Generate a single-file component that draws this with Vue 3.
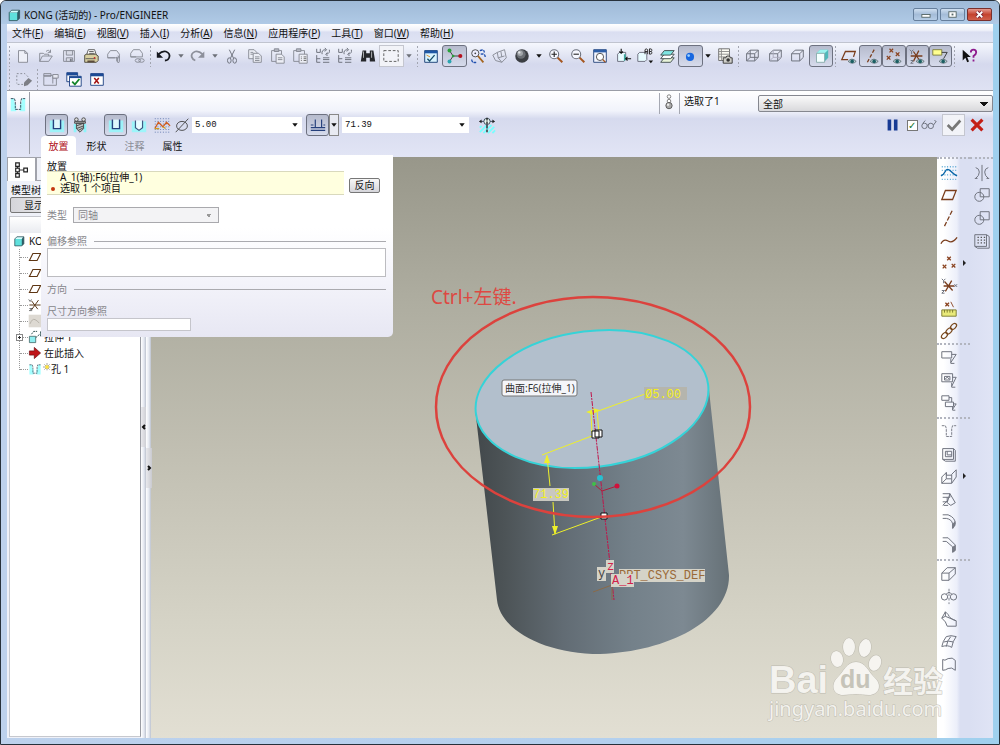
<script setup>
import { h, ref } from 'vue'

const G = 'fill="none" stroke="#858892" stroke-width="1"'
const D = 'fill="none" stroke="#6f737e" stroke-width="1.1"'
const B = 'fill="none" stroke="#7a3d1c" stroke-width="1.4"'
const eye = '<path d="M9 16q4-5 9 0q-4 4-9 0z" fill="#b9cfd2" stroke="#4a5a60" stroke-width=".8"/><circle cx="13.500" cy="16" r="2" fill="#1c5f63"/>'
const cross = (x, y, c = '#8a4320') => `<path d="M${x - 2} ${y - 2}l4 4m0-4l-4 4" stroke="${c}" stroke-width="1.4"/>`
const page = (x, y) => `<path d="M${x} ${y}h6l3 3v7h-9z" fill="#eceef5" stroke="#858892"/>`
const hatch = '<path d="M2 13l2-2M2 18L10 10M6 19l9-9M11 19l7-7M16 19l3-3" stroke="#7ff" stroke-width="2"/>'
const lens = (inner) => `<path d="M11.500 11.500l5.500 5.500" stroke="#a5561f" stroke-width="2.200"/><circle cx="8" cy="8" r="5" fill="#f6f8ff" stroke="#6b707c" stroke-width="1.200"/>${inner}`
const cube = (front) => `<path d="M4 7.500l4-4h9v8l-4 4M4 7.500h9v8H4zM13 7.500l4-4" ${front}/>`

const icons = {
  part: '<path d="M4 7l3-3h10v10l-3 3H4z" fill="#2c5d66"/><path d="M4 7h10v10H4z" fill="#5fe0dc"/><path d="M4 7l3-3h9l-2 3z" fill="#d5ffff"/><path d="M4 7l3-3h10v10l-3 3H4z" fill="none" stroke="#33555c"/>',
  new: '<path d="M5 4h7l3 3v10H5zM12 4v3h3" fill="#eef0f8" stroke="#858892"/>',
  open: `<path d="M3 16V7h4l1 1h5v2M3 16l3-6h11l-4 6zM10 5q3-3 5 1m0-3v3h-3" ${G}/>`,
  save: `<path d="M4 4h12v12H4z" ${G}/><path d="M7 4h7v5H7zM7 12h7v4H7z" fill="#d8dbe6" stroke="#858892"/><path d="M11 13h2v3h-2z" fill="#777b86"/>`,
  print: '<path d="M7 3h7l2 6H5z" fill="#fff" stroke="#555"/><path d="M8 5h5M8 7h6" stroke="#555"/><path d="M3 9l2-1h10l3 2v5l-2 2H3z" fill="#d8cfa0" stroke="#4a463a"/><path d="M4 13h11" stroke="#555"/><path d="M6 15h8v2H6z" fill="#5b4a3a"/><circle cx="14" cy="12" r="1" fill="#c22"/>',
  mail: `<path d="M3 12V8l3-4h7l3 4v4zM3 12h8M14 10q2 0 2 2v4q0 2-2 1V12" ${G}/><path d="M13 11v5" stroke="#858892"/>`,
  maillink: `<path d="M3 11V7l3-4h7l3 4v4zM3 11h6" ${G}/><ellipse cx="11" cy="15" rx="3" ry="2" ${G}/><ellipse cx="15" cy="15" rx="3" ry="2" ${G}/>`,
  undo: '<path d="M4 8q4-4 8-3q5 2 4 6q-1 4-5 4" fill="none" stroke="#16181e" stroke-width="2"/><path d="M2 5v7h7z" fill="#16181e"/>',
  redo: '<path d="M15 8q-4-4-8-3q-5 2-4 6q1 3 4 4" fill="none" stroke="#8d909b" stroke-width="2"/><path d="M17 5v7h-7z" fill="#8d909b"/>',
  down: '<path d="M7 8h6l-3 4z" fill="#6d7078"/>',
  downk: '<path d="M7 8h6l-3 4z" fill="#111"/>',
  cut: `<path d="M7 3l5 10M13 3L8 13" ${D}/><ellipse cx="7" cy="15" rx="2" ry="3" ${D}/><ellipse cx="13" cy="15" rx="2" ry="3" ${D}/>`,
  copy: page(3, 3) + page(8, 7) + '<path d="M5 6h3M5 8h3M10 11h5M10 13h5M10 15h5" stroke="#858892"/>',
  paste: `<path d="M4 4h11v12H4z" ${G}/><path d="M7 2h5v3H7z" fill="#b5b8c2" stroke="#858892"/>` + page(9, 8) + '<path d="M11 12h5M11 14h5" stroke="#858892"/>',
  pastes: `<path d="M3 4h12v12H3z" ${G}/><path d="M6 2h5v3H6z" fill="#b5b8c2" stroke="#858892"/><path d="M9 8h9v10H9z" fill="#eceef5" stroke="#858892"/><path d="M11 11h1m2 0h3M11 13h1m2 0h3M11 15h1m2 0h3" stroke="#666"/>`,
  regen: `<path d="M3 2v4h4V2M3 9v8h4M3 13h4M10 12h7M10 14h7M10 17h7M9 8q-1-5 4-5m-1-2l2 2-2 2M17 3q1 4-3 5m1-2l-2 2 2 2" ${D}/>`,
  find: '<path d="M4 4h4v3h4V4h4l2 12h-6v-4H8v4H2z" fill="#25272b"/><path d="M5 5v7M14 5v7" stroke="#b9bbbd"/>',
  box: '<path d="M2 4h16v12H2z" fill="none" stroke="#555" stroke-dasharray="3 2"/>',
  repaint: '<path d="M3 4h14v13H3z" fill="#d8f3ff" stroke="#12386f"/><path d="M3 4h14v3H3z" fill="#1f57a5"/><path d="M14 9l-6 7M6 13l3 3" stroke="#174d6a" stroke-width="1.500"/><path d="M5 9l4 2" stroke="#e28a1e"/>',
  spin: '<path d="M5 4l4 6h7M9 10l-4 6" fill="none" stroke="#333"/><circle cx="5" cy="4" r="2.200" fill="#28a13a"/><circle cx="5" cy="16" r="2.200" fill="#2aa5b0"/><circle cx="17" cy="10" r="2.300" fill="#b5121f"/><circle cx="9" cy="10" r="1.500" fill="#28a13a"/>',
  orient: '<circle cx="7" cy="7" r="4" fill="#eef" stroke="#444"/><circle cx="7" cy="7" r="1" fill="#444"/><path d="M10 10l6 7" stroke="#a5651f" stroke-width="2"/><path d="M12 4q5-2 5 2m-4 2q5-1 5 3M3 14q0 4 5 3" fill="none" stroke="#1f4fae" stroke-width="1.500" stroke-dasharray="3 1"/>',
  view: `<path d="M2 9l5-3 8-3 2 9-5 5-7-2zM7 6l1 6 7-2M8 12l4 5M11 5l1 6" ${G}/>`,
  sphere: '<circle cx="10" cy="10" r="7.500" fill="#3b3e43"/><circle cx="9" cy="8" r="5" fill="#6b6f75"/><circle cx="8" cy="7" r="3" fill="#a2a6aa"/><circle cx="7" cy="6" r="1.300" fill="#e2e4e6"/>',
  zoomin: lens('<path d="M5 8h6M8 5v6" stroke="#222" stroke-width="1.200"/>'),
  zoomout: lens('<path d="M5 8h6" stroke="#222" stroke-width="1.200"/>'),
  refit: '<path d="M3 3h14v14H3z" fill="#f3f6ff" stroke="#1f3f77"/><path d="M3 3h14v3H3z" fill="#2d5fa8"/><circle cx="10" cy="11" r="4" fill="#fff" stroke="#444"/><path d="M13 14l3 3" stroke="#a5561f" stroke-width="1.500"/>',
  reorient: '<path d="M4 8l2-2h7v8l-2 2H4z" fill="#e7fbff" stroke="#667"/><path d="M11 8h2v6l-2 2z" fill="#3aa79d"/><path d="M8 2v5m-2-2l2 2 2-2M19 13h-6m2-2l-2 2 2 2" fill="none" stroke="#111" stroke-width="1.200"/>',
  saved: '<path d="M2 8l2-2h8v8l-2 2H2z" fill="#e7fbff" stroke="#667"/><path d="M10 8V3q1-2 3 0v5M10 5h3M15 2v6M15 2q4 0 2 3q2 3-2 3M15 5h2" fill="none" stroke="#222"/><path d="M14 15h5l-2.500 3z" fill="#111"/>',
  layers: '<path d="M7 12h11l-4 5H3z" fill="#e9f4d9" stroke="#3c4a4a"/><path d="M7 8h11l-4 5H3z" fill="#fff" stroke="#3c4a4a"/><path d="M7 4h11l-4 5H3z" fill="#7fe5e2" stroke="#3c4a4a"/>',
  ball: '<circle cx="10" cy="11" r="4.500" fill="#1767e0"/><circle cx="8.500" cy="9.500" r="1.500" fill="#9cd0ff"/>',
  camera: '<path d="M3 2h12v13H3z" fill="#fbfbf4" stroke="#666"/><path d="M3 5h12M3 8h12M3 11h12M6 2v13" stroke="#888"/><path d="M8 12h3l1-2h3l1 2h2v6H8z" fill="#cfcfc9" stroke="#333"/><circle cx="13.500" cy="14.500" r="2" fill="#333"/>',
  wire: cube(D) + `<path d="M4 15.500l4-4h9M8 3.500v8" ${D}/>`,
  hidden: cube(D) + '<path d="M4 15.500l4-4h9M8 3.500v8" fill="none" stroke="#aab" />',
  nohidden: cube(D),
  shaded: '<path d="M5 7l4-4h9v9l-4 4z" fill="#4fb9ba"/><path d="M5 7l4-4h9l-4 4z" fill="#9ef3ef"/><path d="M5 7h9v10H5z" fill="#f4ffff" stroke="#8aa"/>',
  plane: `<path d="M2 15L6 5h12l-4 10z" ${B}/>`,
  planeeye: `<path d="M9 14H2l4-9h11l-2 6" ${B}/>` + eye,
  axiseye: `<path d="M6 17L14 2" ${B} stroke-dasharray="4 2"/>` + eye,
  pointeye: cross(7, 4) + cross(14, 8) + cross(4, 12) + eye,
  csyseye: `<path d="M3 10h13M6 5l7 10M12 4L6 16" ${B}/><path d="M2 3l2 2 2-2M4 5v3M3 15h3l-3 3h3" ${D}/>` + eye,
  annoeye: '<path d="M2 3h10v6H2z" fill="#ffff90" stroke="#7b7b3a"/><path d="M12 6h6l-4 7" fill="none" stroke="#333"/>' + eye,
  help: '<path d="M3 3v12l3-3 2 5 2-1-2-5h4z" fill="#111"/><path d="M12 6q0-3 3-3t3 3q0 2-3 4v2M15 14v2" fill="none" stroke="#8d1b8d" stroke-width="2"/>',
  clean: `<path d="M2 4h9l4 4M2 6v9M3 16h7" fill="none" stroke="#858892" stroke-dasharray="2 2"/><path d="M10 14l5-5 4 3-5 5-4 1z" fill="#7d7f86"/>`,
  win: `<path d="M2 6h10v9M2 4h8v3H2zM2 7v10h14V9h-4" ${G}/><path d="M12 5h6v4h-6z" fill="#e6e8f1" stroke="#858892"/>`,
  winok: '<path d="M2 3h12v10H2z" fill="#fff" stroke="#1a3d80"/><path d="M2 3h12v3H2z" fill="#1c4a95"/><path d="M5 7h13v11H5z" fill="#fff" stroke="#1a3d80"/><path d="M5 7h13v2H5z" fill="#1c4a95"/><path d="M8 13l3 3 5-6" fill="none" stroke="#14852a" stroke-width="2"/>',
  winx: '<path d="M3 4h14v13H3z" fill="#fff" stroke="#1a3d80"/><path d="M3 4h14v3H3z" fill="#1c4a95"/><path d="M7 9l5 6m0-6l-5 6" stroke="#a11212" stroke-width="1.700"/>',
  hole: '<path d="M2 4h4v5l2 2v7H2zM18 4h-4v5l-2 2v7h6z" fill="#a4ffff"/><path d="M2 4h4l1 3v9h6V7l1-3h4" fill="none" stroke="#345" stroke-dasharray="3 1"/>',
  straight: '<path d="M2 5h16v13H2z" fill="#9df2f8"/><path d="M7 4h6v10H7z" fill="#dff6fb"/><path d="M6 4v10h8V4" fill="none" stroke="#26407c" stroke-width="1.500"/>',
  screw: '<path d="M3 9h3v9H3zM14 9h3v9h-3z" fill="#8df5fa"/><circle cx="6" cy="4" r="2" fill="#ddd" stroke="#444"/><circle cx="14" cy="4" r="2" fill="#ddd" stroke="#444"/><path d="M4 6h12v2H4zM6 8h8v6l-4 4-4-4z" fill="#c2c6c6" stroke="#444"/><path d="M6 11l8-3M6 14l8-3M8 16l6-3" stroke="#444"/>',
  vhole: '<path d="M2 6h16v12H2z" fill="#9df5fa"/><path d="M7 5h6v8l-3 3-3-3z" fill="#e9fbff"/><path d="M6 5v8l4 3 4-3V5" fill="none" stroke="#3c4f7c" stroke-width="1.200"/>',
  sketch: '<path d="M2 3h17M2 6h17M2 9h17M2 12h17M2 15h17M2 18h17" stroke="#5670a8" stroke-dasharray="1 2"/><path d="M2 14l4-7 5 5 4-5 4 4" fill="none" stroke="#cf5c20" stroke-width="1.400"/><path d="M2 14h5M11 12l3 2" stroke="#cf9c20" stroke-width="1.400"/>',
  dia: '<ellipse cx="10" cy="11" rx="6" ry="5" fill="none" stroke="#444"/><path d="M3 18L17 3" stroke="#444"/>',
  depth: '<path d="M7 4v9h7V4M2 13h16M2 16h16M2 10h3M16 10h2" fill="none" stroke="#26407c" stroke-width="1.300"/>',
  lightaxis: hatch + '<path d="M10 3v16" stroke="#222" stroke-dasharray="3 1" stroke-width="1.500"/><path d="M3 6h14" stroke="#345"/><circle cx="10" cy="6" r="3.500" fill="#e8f8f0" stroke="#345"/><path d="M10 2v9" stroke="#222" stroke-dasharray="3 1" stroke-width="1.500"/><path d="M1 6l3-2v4zM19 6l-3-2v4z" fill="#222"/>',
  traffic: '<circle cx="10" cy="4" r="2" fill="#fff" stroke="#777"/><circle cx="10" cy="9" r="2" fill="#fff" stroke="#777"/><circle cx="10" cy="14" r="3.500" fill="#aaa" stroke="#555"/><circle cx="9" cy="13" r="1.300" fill="#eee"/>',
  pause: '<path d="M4 4h4v12H4zM11 4h4v12h-4z" fill="#173a94"/>',
  glasses: `<circle cx="5" cy="11" r="3" ${D}/><circle cx="12" cy="11" r="3" ${D}/><path d="M8 10h1M3 8l3-3M15 10l3-4-2-1" ${D}/>`,
  ok: '<path d="M3 10l5 5 9-10" fill="none" stroke="#777" stroke-width="3"/>',
  cancel: '<path d="M4 4l12 12M16 4L4 16" stroke="#c41e16" stroke-width="3.500"/>',
  tree: '<path d="M3 2h4v4H3zM3 8h4v4H3zM3 14h4v4H3zM12 8h4v4h-4z" fill="#fff" stroke="#222" stroke-width="1.300"/><path d="M5 6v2M5 12v2M7 10h5" stroke="#222"/>',
  sketchblue: '<path d="M2 3h16M2 7h16M2 12h16M2 17h16" stroke="#4aa0d0" stroke-width="1.500" stroke-dasharray="1 2"/><path d="M1 13q3-1 5-5t6 0t7 5" fill="none" stroke="#0a66a8" stroke-width="1.600"/>',
  axis: `<path d="M5 19L14 1" ${B} stroke-dasharray="5 2"/>`,
  curve: `<path d="M1 13q3-6 8-3t10-4" ${B}/>`,
  points: cross(10, 5) + cross(5, 14) + cross(15, 13),
  csys: `<path d="M4 10h12M5 5l9 10M13 4L6 16" ${B}/><path d="M2 2l2 2 2-2M4 4v3M2 15h3l-3 3h3M16 8l3 3m0-3l-3 3" ${D}/>`,
  ruler: cross(8, 5) + '<path d="M12 2l3 6" stroke="#8a4320"/><path d="M2 11h16v7H2z" fill="#e9ea7a" stroke="#77762c"/><path d="M5 11v3M8 11v3M11 11v3M14 11v3" stroke="#77762c"/>',
  chain: '<g fill="none" stroke="#7a4a20" stroke-width="1.400"><ellipse cx="5" cy="15" rx="4" ry="2.500" transform="rotate(-45 5 15)"/><ellipse cx="10" cy="10" rx="4" ry="2.500" transform="rotate(-45 10 10)"/><ellipse cx="15" cy="5" rx="4" ry="2.500" transform="rotate(-45 15 5)"/></g>',
  note: `<path d="M2 3h11v7H2zM13 6h5l-6 9m0-4v5h4" ${D}/>`,
  note2: `<path d="M2 3h12v9H2zM14 7h4l-5 10m0-4v5h4M5 10V6h6v4zM6 9q2-4 4 0" ${D}/>`,
  note3: `<path d="M2 2h8v5H2zM6 9h9v5H6zM15 11h3l-4 6m0-3v4h3M10 4h3v5" ${D}/>`,
  holeg: `<path d="M2 3h4l1 3v9h6V6l1-3h4" fill="none" stroke="#6f737e" stroke-dasharray="3 1"/>`,
  shell: `<path d="M3 4h12v12H3zM15 4l2 2v12H6l-3-2M6 7h7v6H6zM8 7v4h5" ${D}/>`,
  rib: `<path d="M2 10l5-5v7h6V7l5-5v8l-5 7H2zM7 12l-5 5M13 12v5M7 5v3h6" ${D}/>`,
  draft: `<path d="M3 3h8v4H3M3 12h5V7M11 3l6 10-5 3-4-3 3-10M3 16l6-6M9 16H4" ${D}/>`,
  round: `<path d="M3 2h6q8 3 8 10l-3 5v-5q-1-5-7-6H3" ${D}/><path d="M14 12l3-3v5l-3 4z" fill="#777a84"/>`,
  chamfer: `<path d="M3 2h6l8 8v6l-3 2v-6L7 6H3" ${D}/><path d="M14 12l3-2v6l-3 3z" fill="#777a84"/>`,
  extrude: `<path d="M2 9h8v8H2zM2 9l6-6h9v7l-7 7M10 9l7-6" ${D}/>`,
  revolve: `<circle cx="5" cy="11" r="3.500" ${D}/><circle cx="15" cy="11" r="3.500" ${D}/><path d="M10 2v17" fill="none" stroke="#777b86" stroke-dasharray="3 2"/><path d="M7 8q3-4 6 0" ${D}/>`,
  sweep: `<path d="M6 2l3 3q2 5 9 7v6H8q-1-5-6-9zM6 2v5L2 9M6 7l12 5" ${D}/>`,
  blend: `<path d="M7 4q5-2 11 0q-4 5-5 12q-4-3-11-1q1-6 5-11zM4 10q5-2 11 0M12 4q-4 4-5 11" ${D}/>`,
  style: `<path d="M3 5q2 2 6-1 5-2 8 2v11q-4-4-8-2-3 2-6 2z" ${D}/>`,
  mirror: `<path d="M10 1v18M3 4q4 1 4 5t-4 7M17 4q-4 1-4 5t4 7M2 16h3M15 16h3" ${D}/>`,
  merge: `<circle cx="7" cy="12" r="5" ${D}/><path d="M8 3h10v9H8z" ${D}/>`,
  pattern: `<path d="M2 3h13v13H2zM15 3l3 2v13H5l-3-2" ${D}/><path d="M5 6h9M5 9h9M5 12h9" stroke="#555" stroke-width="1.500" stroke-dasharray="1.500 2"/>`,
  tplane: '<path d="M2 15L7 5h11l-5 10z" fill="none" stroke="#5d3512" stroke-width="1.600"/>',
  tcsys: '<path d="M2 10h16M5 4l9 12M15 3L5 17" fill="none" stroke="#5b3a1a" stroke-width="1.400"/><path d="M1 2l2 3 2-3M2 15h4l-4 3h4" fill="none" stroke="#444"/>',
  tsketch: '<path d="M1 1h18v18H1z" fill="#ddd9d2"/><path d="M3 14q3-8 7-6t6 5" fill="none" stroke="#a8a39a"/>',
  textrude: '<path d="M2 9h9v9H2z" fill="#90eef0" stroke="#355"/><path d="M11 11l7-6M5 6l3-4h5M18 2v8" fill="none" stroke="#355" stroke-width="1.400" stroke-dasharray="3 1"/>',
  arrow: '<path d="M2 7h7V2l9 8-9 8v-5H2z" fill="#c01418" stroke="#6b0c0e"/>',
  star: '<path d="M10 1v18M1 10h18M4 4l12 12M16 4L4 16" stroke="#444" stroke-width="2" stroke-dasharray="2 1"/><path d="M6 6h8v8H6z" fill="#ffe23a"/>',
}
const Ico = (p) => h('svg', { class: 'ico', viewBox: '0 0 20 20', 'aria-hidden': 'true', innerHTML: icons[p.n] })
Ico.props = ['n']

const menus = [
  ['文件', 'F'], ['编辑', 'E'], ['视图', 'V'], ['插入', 'I'], ['分析', 'A'],
  ['信息', 'N'], ['应用程序', 'P'], ['工具', 'T'], ['窗口', 'W'], ['帮助', 'H'],
]
const row1 = [
  { c: 'g6', items: ['new', 'open', 'save', 'print', 'mail', 'maillink'] },
  { c: 'gedit', items: ['undo', '-down', 'redo', '-down', 'cut', 'copy', 'paste', 'pastes', 'regen', 'regen', 'find', '~box', '-down'] },
  { c: 'gview', items: ['repaint', '+spin', 'orient', 'view', 'sphere', '-downk', 'zoomin', 'zoomout', 'refit', 'reorient', 'saved', 'layers', '+ball', '-downk', 'camera'] },
  { c: 'g4', items: ['wire', 'hidden', 'nohidden', '+shaded'] },
  { c: 'g5', items: ['planeeye', '+axiseye', '+pointeye', '+csyseye', '+annoeye'] },
  { c: 'g1', items: ['help'] },
]
const row2 = [
  { c: 'g1', items: ['clean'] },
  { c: 'g3', items: ['win', 'winok', 'winx'] },
]
const side1 = [
  ['sketchblue', 'plane', 'axis', 'curve', 'points', 'csys', 'ruler', 'chain'],
  ['note', 'note2', 'note3'],
  ['holeg', 'shell', 'rib', 'draft', 'round', 'chamfer'],
  ['extrude', 'revolve', 'sweep', 'blend', 'style'],
]
const side2 = ['mirror', 'merge', 'merge', 'pattern']
const flyouts = ['points', 'rib']
const tree = [
  { i: 'tplane' }, { i: 'tplane' }, { i: 'tplane' }, { i: 'tcsys' }, { i: 'tsketch' },
  { i: 'textrude', t: '拉伸 1', plus: true }, { i: 'arrow', t: '在此插入' }, { i: 'hole', t: '孔 1', star: true },
]
const bare = (n) => n.replace(/^[-+~]/, '')
const kind = (n) => ({ '-': 'half', '+': 'pressed', '~': 'framed' })[n[0]] || ''
const diameter = ref('5.00')
const depth = ref('71.39')
const preview = ref(true)
</script>

<template>
  <div class="window">
    <header class="title">
      <Ico n="part" />
      <span class="caption">KONG (活动的) - Pro/ENGINEER</span>
      <button class="wb" aria-label="最小化"><svg viewBox="0 0 24 12"><rect x="8" y="6" width="9" height="3" fill="#fff" stroke="#566" /></svg></button>
      <button class="wb" aria-label="最大化"><svg viewBox="0 0 24 12"><rect x="8" y="3" width="8" height="6" fill="#fff" stroke="#566" /><rect x="11" y="5" width="2" height="2" fill="#566" /></svg></button>
      <button class="wb close" aria-label="关闭"><svg viewBox="0 0 24 12"><path d="M9 3l6 6M15 3l-6 6" stroke="#723" stroke-width="4" /><path d="M9 3l6 6M15 3l-6 6" stroke="#fff" stroke-width="2" /></svg></button>
    </header>

    <nav class="menu">
      <button v-for="m in menus" :key="m[1]">{{ m[0] }}(<u>{{ m[1] }}</u>)</button>
    </nav>

    <div class="toolbars">
      <div v-for="(row, r) in [row1, row2]" :key="r" class="row">
        <template v-for="(g, k) in row" :key="k">
          <i class="grip"></i>
          <div class="group" :class="g.c">
            <button v-for="(n, j) in g.items" :key="j" class="tb" :class="kind(n)" :aria-label="bare(n)"><Ico :n="bare(n)" /></button>
          </div>
        </template>
      </div>
    </div>

    <section class="dash">
      <div class="feature"><Ico n="hole" /></div>
      <div class="dashmain">
        <div class="status">
          <span class="light"><Ico n="traffic" /></span>
          <span class="count">选取了1</span>
          <select class="filter" aria-label="过滤器"><option>全部</option></select>
        </div>
        <div class="controls">
          <button class="tb pressed" aria-label="straight"><Ico n="straight" /></button>
          <button class="tb" aria-label="screw"><Ico n="screw" /></button>
          <button class="tb pressed second" aria-label="profile"><Ico n="straight" /></button>
          <button class="tb" aria-label="standard"><Ico n="vhole" /></button>
          <button class="tb" aria-label="sketch"><Ico n="sketch" /></button>
          <label class="dia" for="diameter" aria-label="直径"><Ico n="dia" /></label>
          <span class="combo"><input id="diameter" v-model="diameter" /><button aria-label="直径列表"><Ico n="downk" /></button></span>
          <button class="tb pressed" aria-label="depth"><Ico n="depth" /></button>
          <button class="tb split" aria-label="深度选项"><Ico n="downk" /></button>
          <span class="combo wide"><input v-model="depth" aria-label="深度" /><button aria-label="深度列表"><Ico n="downk" /></button></span>
          <button class="tb" aria-label="lightweight"><Ico n="lightaxis" /></button>
          <div class="finish">
            <button class="tb" aria-label="暂停"><Ico n="pause" /></button>
            <input id="preview" v-model="preview" type="checkbox" />
            <label for="preview" aria-label="预览"><Ico n="glasses" /></label>
            <button class="tb framed" aria-label="确定"><Ico n="ok" /></button>
            <button class="tb" aria-label="取消"><Ico n="cancel" /></button>
          </div>
        </div>
        <div class="tabs">
          <button class="on">放置</button><button>形状</button><button class="off">注释</button><button>属性</button>
        </div>
      </div>

      <form class="slide" @submit.prevent>
        <div class="lbl">放置</div>
        <div class="pick">
          <ul><li>A_1(轴):F6(拉伸_1)</li><li class="dot">选取 1 个项目</li></ul>
          <button type="button">反向</button>
        </div>
        <div class="type"><label for="type">类型</label><select id="type" disabled><option>同轴</option></select></div>
        <label class="rule first" for="offsets">偏移参照</label>
        <textarea id="offsets" readonly></textarea>
        <div class="rule">方向</div>
        <label class="dimref" for="dimref">尺寸方向参照</label>
        <input id="dimref" readonly />
      </form>
    </section>

    <main class="work">
      <aside class="model">
        <div class="mtabs"><button class="on" aria-label="模型树"><Ico n="tree" /></button><button aria-label="文件夹"></button></div>
        <div class="mtitle">模型树</div>
        <button class="show">显示</button>
        <div class="treebox">
          <div class="thead"></div>
          <div class="root"><Ico n="part" /><span>KONG.PRT</span></div>
          <ul class="tree">
            <li v-for="(t, k) in tree" :key="k">
              <b v-if="t.plus"></b><Ico :n="t.i" /><Ico v-if="t.star" n="star" class="tiny" /><span>{{ t.t }}</span>
            </li>
          </ul>
        </div>
      </aside>
      <div class="sash"><button class="s1" aria-label="收起"><svg viewBox="0 0 6 40"><path d="M4 18l-2 2 2 2" /></svg></button></div>
      <div class="sash"><button class="s2" aria-label="展开"><svg viewBox="0 0 6 40"><path d="M2 18l2 2-2 2" /></svg></button></div>

      <div class="viewport">
        <svg class="scene" viewBox="151 157 786 581">
          <defs>
            <linearGradient id="side" x1="0" x2="1" y1="0" y2="0">
              <stop offset="0" stop-color="#42484b" /><stop offset=".12" stop-color="#4d5457" />
              <stop offset=".35" stop-color="#626c74" /><stop offset=".62" stop-color="#74818a" />
              <stop offset=".82" stop-color="#7d8992" /><stop offset="1" stop-color="#667177" />
            </linearGradient>
          </defs>
          <path d="M475 408L497 600C500 630 545 654 600 654C668 652 730 620 729 575L709 390Z" fill="url(#side)" />
          <ellipse cx="592" cy="399" rx="117" ry="68" transform="rotate(-7 592 399)" fill="#b2bfcc" stroke="#35d3d8" stroke-width="2" />
          <g class="dim">
            <path d="M542 455L597 434M645 394L590 414M591 412L592 434M597 410L599 434M547 456L550 486M553 502L555 534M552 535L604 516" />
            <path d="M547 454l-3 9h6zM555 535l-3-9h6zM586 412l8-3v6zM600 410l-8-2v6z" class="tip" />
          </g>
          <path d="M591 392L614 600" stroke="#c0144a" stroke-dasharray="5 1 2 1" />
          <path d="M594 484l8 7 15-5" fill="none" stroke="#b01c3a" />
          <circle cx="600" cy="478" r="3" fill="#28bfd0" /><circle cx="594" cy="484" r="2" fill="#3fc048" /><circle cx="617" cy="486" r="2.500" fill="#d0123c" />
          <path d="M595 430h7v7h-7zM592 431h7v7h-7zM601 513h6v6h-6z" fill="#fff" stroke="#111" />
          <path d="M593 592l19-7M612 585v15" stroke="#8a6a48" />
          <rect x="644" y="387" width="43" height="13" fill="#b5b5ad" /><rect x="533" y="488" width="36" height="13" fill="#c9c8c0" />
          <rect x="597" y="567" width="9" height="14" fill="#d5d3c8" /><rect x="606" y="560" width="8" height="13" fill="#d5d3c8" />
          <rect x="619" y="569" width="86" height="13" fill="#d5d3c8" />
          <text class="cad n" x="619" y="579">PRT_CSYS_DEF</text>
          <rect x="611" y="574" width="23" height="13" fill="#d5d3c8" />
          <text class="cad y" x="645" y="398">Ø5.00</text>
          <text class="cad y" x="533" y="498">71.39</text>
          <text class="cad r" x="612" y="584">A_1</text>
          <text class="cad k" x="598" y="577">y</text><text class="cad r" x="607" y="570">z</text>
          <ellipse cx="593" cy="407" rx="157" ry="110" fill="none" stroke="#dc423d" stroke-width="2.500" />
          <text class="hint" x="431" y="304">Ctrl+左键.</text>
          <rect x="502" y="380" width="75" height="16" rx="2" fill="#f4f5f9" stroke="#777" />
          <text class="tip-text" x="505" y="392">曲面:F6(拉伸_1)</text>
        </svg>
      </div>

      <div class="side one">
        <div v-for="(g, k) in side1" :key="k" class="vgroup">
          <button v-for="n in g" :key="n" class="tb" :class="{ fly: flyouts.includes(n) }" :aria-label="n"><Ico :n="n" /></button>
        </div>
      </div>
      <div class="side two">
        <div class="vgroup"><button v-for="(n, k) in side2" :key="k" class="tb" :aria-label="n"><Ico :n="n" /></button></div>
      </div>

      <svg class="mark" viewBox="0 0 184 90" aria-label="Baidu 经验">
        <g class="wm">
          <text class="big" x="2" y="59">Bai</text>
          <ellipse cx="70" cy="25" rx="6" ry="8" transform="rotate(-12 70 25)" /><ellipse cx="82" cy="13" rx="6" ry="9" />
          <ellipse cx="98" cy="14" rx="6" ry="9" transform="rotate(12 98 14)" /><ellipse cx="108" cy="29" rx="6" ry="8" transform="rotate(20 108 29)" />
          <path d="M89 28c10 0 12 10 19 16c8 8 3 17-6 17c-5 0-8-1-13-1s-9 1-13 1c-9 0-13-9-6-17c7-6 9-16 19-16z" />
          <text class="cn" x="116" y="58">经验</text>
          <text class="url" x="2" y="82">jingyan.baidu.com</text>
        </g>
        <text class="du" x="73" y="54">du</text>
      </svg>
    </main>
  </div>
</template>

<style>
body { margin: 0; }
.ico { width: 18px; height: 18px; display: block; flex: none; }
</style>

<style scoped>
.window { box-sizing: border-box; height: 100vh; display: flex; flex-direction: column; padding: 0 6px 6px; border: 1px solid #27313b; border-radius: 6px 6px 0 0; background: linear-gradient(90deg, #bdd1ec, #b4d0ee 60%, #9fd0ee); font: 10px/14px "Noto Sans", "Noto Sans CJK SC", sans-serif; color: #111; }
button, input, select, textarea { font: inherit; color: inherit; margin: 0; padding: 0; border: 0; background: none; box-sizing: border-box; border-radius: 0; outline: 0; }
ul { list-style: none; margin: 0; padding: 0; }
.title { height: 23px; flex: none; display: flex; align-items: center; margin: 0 -6px; padding: 4px 7px 0 5px; box-sizing: border-box; background: linear-gradient(#9fbad7, #b0cae6); border-radius: 5px 5px 0 0; }
.title .ico { width: 16px; height: 16px; }
.caption { flex: 1; padding-left: 2px; }
.wb { width: 25px; height: 13px; margin-left: 2px; border: 1px solid #667f9c; border-radius: 2px; background: linear-gradient(#cfdff0, #a4bcd8 50%, #b6cde6); }
.wb svg { display: block; width: 100%; height: 100%; }
.close { background: linear-gradient(#e59a90, #c4432f 50%, #d0604c); border-color: #7a302c; }
.menu { height: 19px; flex: none; display: flex; gap: 11px; padding-left: 5px; align-items: center; background: linear-gradient(#fff, #eff1f9 35%, #dadef1 45%, #dfe3f4); border-bottom: 1px solid #c0c4cf; box-sizing: border-box; }
.menu button { white-space: nowrap; }
.toolbars { flex: none; padding: 2px 0 0; height: 48px; box-sizing: border-box; border-bottom: 1px solid #9a9da6; background: linear-gradient(#f5f7fd, #d5d9ed 45%, #dfe2f3); display: flex; flex-direction: column; gap: 1px; }
.row { display: flex; height: 22px; }
.grip { width: 5px; flex: none; background: radial-gradient(circle, #a2a5b0 1px, transparent 1px) 0 0 / 5px 4px; }
.group { display: flex; flex: none; }
.g1 { width: 23px; } .g3 { width: 68px; } .g4 { width: 92px; } .g5 { width: 114px; } .g6 { width: 136px; } .gedit { width: 262px; } .gview { width: 316px; }
.tb { display: flex; align-items: center; justify-content: center; height: 22px; width: 23px; flex: none; }
.group .tb { flex: 2 1 0; width: 0; }
.group .half { flex: 1 1 0; overflow: hidden; }
.pressed { background: linear-gradient(#b6bbcd, #d6dbec); border: 1px solid #6d7180; border-radius: 3px; }
.framed { background: #f2f3f8; border: 1px solid #c4c6cf; }
.dash { position: relative; height: 66px; flex: none; display: flex; background: linear-gradient(#fff, #f1f3fb 30%, #d6daee 42%, #e2e5f5); z-index: 2; }
.feature { width: 23px; flex: none; border-right: 1px solid #9a9da6; padding: 3px 0 0 2px; box-sizing: border-box; margin: 1px 0 3px; }
.dashmain { flex: 1; display: flex; flex-direction: column; }
.status { height: 23px; display: flex; justify-content: flex-end; box-sizing: border-box; padding-top: 2px; }
.light { border: solid #a5a8b2; border-width: 0 1px; width: 21px; box-sizing: border-box; }
.count { width: 78px; padding: 1px 0 0 4px; box-sizing: border-box; }
.filter { appearance: none; width: 235px; height: 17px; margin-top: 2px; padding-left: 4px; border: 1px solid #85878f; border-radius: 2px; background: linear-gradient(45deg, transparent 50%, #111 50%) calc(100% - 8px) 6px / 4px 4px no-repeat, linear-gradient(315deg, transparent 50%, #111 50%) calc(100% - 4px) 6px / 4px 4px no-repeat, linear-gradient(#fafafa, #d9d9dc); }
.controls { display: flex; height: 22px; padding-left: 15px; align-items: center; }
.second { margin-left: 13px; }
.dia { width: 19px; }
.combo { display: flex; width: 110px; height: 16px; background: #fff; margin-right: 4px; }
.combo input { flex: 1; min-width: 0; padding-left: 3px; font: 9px/16px "Liberation Mono", monospace; }
.combo button { width: 14px; overflow: hidden; display: flex; align-items: center; justify-content: center; }
.wide { width: 127px; margin-right: 6px; }
.split { width: 10px; overflow: hidden; border: 1px solid #888; background: #e8eaf2; margin-right: 3px; }
.finish { margin-left: auto; display: flex; align-items: center; gap: 0; padding-right: 5px; }
.finish input { appearance: none; width: 11px; height: 11px; background: #fff; border: 1px solid #777; margin: 0 2px 0 3px; }
.finish input:checked::after { content: "✓"; display: block; color: #14741f; font: bold 10px/9px "DejaVu Sans", sans-serif; }
.finish label { margin-right: 4px; }
.tabs { display: flex; flex: 1; padding-left: 11px; }
.tabs button { width: 35px; margin-right: 3px; padding-bottom: 2px; border-radius: 4px 4px 0 0; }
.tabs .on { background: #fff; color: #b01018; }
.tabs .off { color: #8c8e97; }
.slide { position: absolute; left: 34px; top: 64px; width: 352px; height: 182px; box-sizing: border-box; padding: 4px 7px 0 6px; background: linear-gradient(#fff 40%, #f5f5fb 65%, #e7e7f3); border-radius: 0 0 5px 0; display: flex; flex-direction: column; }
.lbl { height: 12px; line-height: 14px; flex: none; }
.pick { display: flex; align-items: center; gap: 5px; flex: none; }
.pick ul { width: 297px; height: 24px; background: #ffffdf; border: solid #d9d9bd; border-width: 1px 0; box-sizing: border-box; line-height: 11px; }
.pick li { padding-left: 13px; position: relative; }
.dot::before { content: ""; position: absolute; left: 4px; top: 4px; width: 4px; height: 4px; border-radius: 2px; background: #c4370f; }
.pick button { width: 31px; height: 15px; line-height: 13px; border: 1px solid #777; border-radius: 2px; background: linear-gradient(#f7f7f7, #d5d5da); margin-top: 5px; }
.type { display: flex; align-items: center; gap: 6px; margin-top: 12px; color: #86868b; flex: none; }
.type select { appearance: none; width: 146px; height: 16px; padding-left: 4px; opacity: 1; border: 1px solid #a9a9ad; background: linear-gradient(45deg, transparent 50%, #999 50%) calc(100% - 9px) 6px / 3px 3px no-repeat, linear-gradient(315deg, transparent 50%, #999 50%) calc(100% - 6px) 6px / 3px 3px no-repeat, #f3f3f5; }
.rule { display: flex; align-items: center; gap: 7px; height: 14px; color: #86868b; flex: none; margin-top: 5px; }
.rule::after { content: ""; flex: 1; height: 1px; background: #aaaaaf; }
.first { margin-top: 11px; }
.slide textarea { height: 29px; margin: 0; border: 1px solid #bcbcc0; background: #fff; resize: none; flex: none; }
.dimref { color: #86868b; margin-top: 8px; flex: none; }
#dimref { width: 144px; height: 13px; border: 1px solid #c5c5cb; background: #fff; flex: none; }
.work { flex: 1; min-height: 0; display: flex; position: relative; }
.model { width: 134px; flex: none; display: flex; flex-direction: column; background: #eff1f8; }
.mtabs { height: 24px; display: flex; }
.mtabs .on { width: 29px; background: #fff; border: 1px solid #a1a3ab; border-bottom: 0; padding-left: 5px; }
.mtabs button { width: 30px; border: 1px solid #a1a3ab; }
.mtitle { padding: 1px 0 0 4px; height: 16px; box-sizing: border-box; line-height: 16px; }
.show { height: 16px; width: 60px; border: 1px solid #777; border-radius: 2px; background: linear-gradient(90deg, #d5d5da, #f4f4f4); margin: 0 0 0 3px; text-align: left; padding-left: 13px; line-height: 13px; }
.treebox { flex: 1; margin: 3px 0 1px 2px; background: #fff; border: 1px solid #c6c8ce; border-right-color: #9a9ca3; }
.thead { height: 16px; background: linear-gradient(#fff, #e9ebf0); }
.root { display: flex; align-items: center; height: 16px; padding-left: 2px; gap: 3px; }
.root span { width: 14px; overflow: hidden; }
.root .ico { width: 14px; height: 14px; }
.tree { margin-left: 9px; border-left: 1px dotted #999; height: 121px; }
.tree li { display: flex; align-items: center; height: 16px; position: relative; padding-left: 8px; white-space: nowrap; }
.tree li::before { content: ""; position: absolute; left: 0; width: 8px; border-top: 1px dotted #999; }
.tree .ico { width: 14px; height: 14px; margin-right: 2px; }
.tree .tiny { width: 8px; height: 8px; margin: -4px 0 0 -1px; }
.tree b { position: absolute; left: -4px; width: 7px; height: 7px; border: 1px solid #888; box-sizing: border-box; z-index: 1; background: linear-gradient(#333, #333) center / 3px 1px no-repeat, linear-gradient(#333, #333) center / 1px 3px no-repeat, #fff; }
.sash { width: 5px; flex: none; background: linear-gradient(90deg, #fff, #e3e7f0 60%, #bcc2ce); position: relative; }
.sash button { display: block; width: 6px; height: 40px; background: linear-gradient(90deg, #e9e9ed, #c9cad0); position: absolute; left: 0; top: 250px; }
.sash .s2 { top: 291px; }
.sash svg { display: block; fill: none; stroke: #111; stroke-width: 2; }
.viewport { flex: 1; min-width: 0; background: linear-gradient(#98978a, #aeada0 25%, #c4c2b5 55%, #d5d3c6 80%, #e2dfd3); }
.scene { display: block; width: 100%; height: 100%; }
.dim { fill: none; stroke: #eef02a; }
.dim .tip { fill: #eef02a; stroke: none; }
.cad { font: 12px "Liberation Mono", monospace; }
.y { fill: #f2f01c; } .n { fill: #9a6a38; } .r { fill: #d3204a; } .k { fill: #444; }
.hint { font: 19px "Noto Sans", "Noto Sans CJK SC", sans-serif; fill: #de4842; }
.tip-text { font: 10px "Noto Sans", "Noto Sans CJK SC", sans-serif; fill: #333; }
.side { flex: none; box-sizing: border-box; }
.one { width: 33px; background: linear-gradient(90deg, #fff 20%, #eceffa 60%, #dadff2 70%); }
.two { width: 23px; background: linear-gradient(90deg, #dadff2, #e0e4f5); }
.vgroup { border-top: 2px dotted #b2b5bf; padding: 1px 0 3px; }
.vgroup:first-child { padding: 2px 0 1px; }
.side .tb { position: relative; height: 23px; }
.side .vgroup .tb:nth-child(3n+2) { height: 22px; }
.fly::after { content: ""; position: absolute; left: 26px; top: 8px; border: solid transparent; border-width: 3px 0 3px 3px; border-left-color: #222; }
.mark { position: absolute; right: 42px; bottom: 14px; width: 184px; height: 90px; overflow: visible; pointer-events: none; }
.wm { fill: #f8f7f4; fill-opacity: .9; stroke: #b5b3a9; stroke-opacity: .8; stroke-width: 1; paint-order: stroke; }
.big { font: bold 38px "Liberation Sans", sans-serif; }
.cn { font: bold 30px "Noto Sans CJK SC", sans-serif; }
.url { font: 20px "Noto Sans", sans-serif; }
.du { font: bold 25px "Liberation Sans", sans-serif; fill: #c6c4b9; }
</style>
